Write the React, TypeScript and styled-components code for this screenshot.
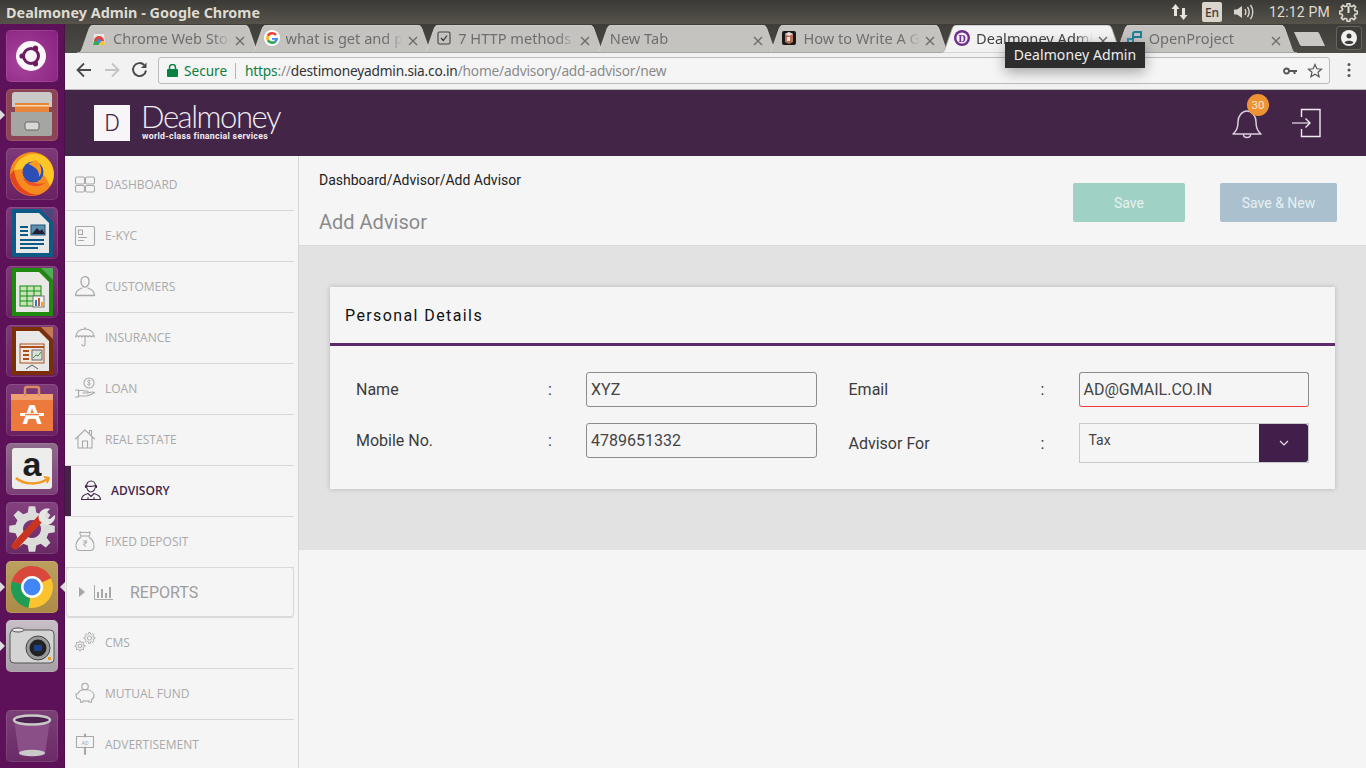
import React from "react";
import styled, { createGlobalStyle } from "styled-components";

const Global = createGlobalStyle`
  html, body { margin: 0; padding: 0; width: 1366px; height: 768px; overflow: hidden; background: #f5f5f5; }
  #root { width: 1366px; height: 768px; overflow: hidden; }
  * { box-sizing: border-box; }
`;

const uiFont = `"Noto Sans", "Open Sans", sans-serif`;
const roboto = `Roboto, "Liberation Sans", sans-serif`;
const plum = "#432548";

const Screen = styled.div`display: flex; flex-direction: column; width: 1366px; height: 768px; overflow: hidden; position: relative;`;
const TopBar = styled.header`
  height: 24px; flex: none; display: flex; align-items: center; padding: 0 8px 0 6px;
  background: linear-gradient(#3b3a36, #55534a);
  color: #dfdbd2;
`;
const WindowTitle = styled.div`flex: 1; white-space: nowrap; font: 700 14.4px ${uiFont};`;
const TrayIcon = styled.svg<{ $ml: number }>`display: block; margin-left: ${p => p.$ml}px; flex: none;`;
const LangBox = styled.div`
  width: 20px; height: 20px; margin-left: 14px; background: #d9d5cd; border-radius: 2px; color: #3c3b37;
  font: 500 12px ${uiFont}; display: flex; align-items: center; justify-content: center;
`;
const Clock = styled.div`margin-left: 14px; font: 400 14px ${roboto}; color: #dfdbd2; letter-spacing: .2px; white-space: nowrap;`;

const Desktop = styled.div`flex: 1; display: flex; min-height: 0;`;
const Launcher = styled.nav`
  width: 65px; flex: none; background: #5d1158; display: flex; flex-direction: column; align-items: center;
  padding-top: 6px; gap: 7px; border-right: 1px solid #4a0e48;
`;
const Tile = styled.div<{ $bg: string; $gap?: number }>`
  width: 52px; height: 52px; border-radius: 5px; flex: none; position: relative; background: ${p => p.$bg};
  margin-top: ${p => p.$gap || 0}px; box-shadow: inset 0 0 0 1px rgba(255,255,255,.1);
`;
const TileArt = styled.svg`display: block; width: 52px; height: 52px;`;
const PipLeft = styled.i`position: absolute; left: -6px; top: 21px; border: 5px solid transparent; border-left: 5px solid #ddd; border-right: 0;`;
const PipRight = styled.i`position: absolute; right: -7px; top: 21px; border: 5px solid transparent; border-right: 5px solid #ddd; border-left: 0;`;

const Browser = styled.div`flex: 1; min-width: 0; display: flex; flex-direction: column;`;
const TabStrip = styled.div`
  height: 29px; flex: none; display: flex; align-items: flex-end; padding-left: 12px; position: relative;
  background: linear-gradient(#3f3d39, #4d4b45);
`;
const Tab = styled.div<{ $active?: boolean }>`
  width: 184px; height: 28px; flex: none; margin-right: -11.4px; position: relative; z-index: ${p => p.$active ? 3 : 1};
  display: flex; align-items: center; padding: 0 0 2px 14px;
  color: ${p => p.$active ? "#444" : "#6e6e6e"}; font: 400 14.6px ${uiFont};
`;
const TabShape = styled.svg`position: absolute; left: 0; top: 0; width: 184px; height: 28px; z-index: -1;`;
const Favicon = styled.svg`width: 16px; height: 16px; flex: none; margin-right: 5px;`;
const TabLabel = styled.span<{ $noIcon?: boolean }>`
  width: 117px; margin-left: 1px; overflow: hidden; white-space: nowrap;
  -webkit-mask-image: linear-gradient(90deg, #000 85%, transparent);
  mask-image: linear-gradient(90deg, #000 85%, transparent);
`;
const TabClose = styled.span`position: absolute; left: 157px; top: 6px; width: 12px; height: 12px;`;
const NewTab = styled.svg`width: 34px; height: 16px; margin: 0 0 6px 9px; flex: none;`;
const ProfileBtn = styled.div`
  position: absolute; right: 4px; top: 2px; width: 26px; height: 24px; border-radius: 4px; background: #3d3b37;
  box-shadow: inset 0 0 0 1px #66645e; display: flex; align-items: center; justify-content: center;
`;

const Toolbar = styled.div`
  height: 37px; flex: none; display: flex; align-items: center; background: #f2f2f2; border-bottom: 1px solid #b9b9b9;
  padding: 0 0 2px 9px;
`;
const NavBtn = styled.svg`width: 20px; height: 20px; margin-right: 8px; flex: none; display: block;`;
const Omnibox = styled.div`
  margin-left: 0; width: 1172px; height: 27px; display: flex; align-items: center; background: #f5f5f5;
  border: 1px solid #bcbcbc; border-radius: 3px; padding: 0 6px 0 8px; font: 400 13.7px ${uiFont}; flex: none; margin-top: 1px;
`;
const LockIcon = styled.svg`flex: none;`;
const KeyIcon = styled.svg`flex: none; margin-right: 10px;`;
const StarIcon = styled.svg`flex: none;`;
const Secure = styled.span`color: #0b8043; margin-left: 6px; font-size: 13.6px;`;
const OmniSep = styled.span`width: 1px; height: 16px; background: #b5b5b5; margin: 0 9px 0 8px;`;
const Url = styled.div`flex: 1; white-space: nowrap; color: #8a8a8a; letter-spacing: -.19px;`;
const UrlGreen = styled.span`color: #0b8043;`;
const UrlHost = styled.span`color: #333;`;
const MenuDots = styled.svg`width: 4px; height: 16px; margin-left: 17px; flex: none;`;

const Tooltip = styled.div`
  position: absolute; left: 1005px; top: 42px; width: 140px; height: 26px; background: #2d2d2d; color: #eee;
  font: 400 14px ${uiFont}; display: flex; align-items: center; justify-content: center; z-index: 10; padding-bottom: 2px;
  box-shadow: 0 4px 14px rgba(0,0,0,.35); letter-spacing: .1px; white-space: nowrap;
`;

const Page = styled.div`flex: 1; min-height: 0; display: flex; flex-direction: column; background: #f5f5f5;`;
const AppHeader = styled.header`
  height: 66px; flex: none; background: ${plum}; display: flex; align-items: center; padding: 0 44px 0 29px;
`;
const LogoBox = styled.div`
  width: 36px; height: 36px; background: #f7f5f7; color: ${plum}; font: 300 24px ${roboto};
  display: flex; align-items: center; justify-content: center; flex: none;
`;
const Brand = styled.div`margin-left: 12px; padding-top: 11px; color: #f1ecf1; display: flex; flex-direction: column; flex: 1; align-self: flex-start;`;
const BrandName = styled.div`font: 300 31px/30px Lato, ${roboto}; letter-spacing: -1.45px; height: 30px; margin-left: -1px;`;
const BrandTag = styled.div`font: 700 8.8px/9px ${roboto}; letter-spacing: .28px; white-space: nowrap; margin-top: 1px;`;
const BellWrap = styled.div`position: relative; width: 30px; height: 30px; margin-top: 4px; flex: none;`;
const Badge = styled.span`
  position: absolute; left: 15px; top: -16px; width: 22px; height: 22px; border-radius: 50%; background: #ed9334; color: #f8e5cf;
  font: 400 11.5px ${roboto}; display: flex; align-items: center; justify-content: center;
`;
const HeadIcon = styled.svg`display: block; flex: none;`;
const LogoutIcon = styled(HeadIcon)`margin-left: 30px;`;

const Body = styled.div`flex: 1; min-height: 0; display: flex;`;
const Sidebar = styled.aside`
  width: 234px; flex: none; border-right: 1px solid #d5d5d5; padding: 4px 4px 0 0; overflow: hidden;
`;
const MenuRow = styled.div<{ $active?: boolean }>`
  height: 51px; display: flex; align-items: center; border-bottom: 1px solid #d7d7d7; padding: 0 0 2px ${p => p.$active ? 16 : 10}px;
  box-shadow: ${p => p.$active ? `inset 6px 0 0 ${plum}` : "none"};
  color: ${p => p.$active ? plum : "#a9a9a9"};
  font: ${p => p.$active ? 600 : 400} 12px "Open Sans", sans-serif;
`;
const MenuGlyph = styled.svg`width: 20px; height: 20px; margin-right: 10px; flex: none; display: block; overflow: visible;`;
const ReportsRow = styled.div`
  height: 50px; margin: -1px 0 1px 1px; display: flex; align-items: center; padding-left: 12px; color: #9d9d9d;
  border: 1px solid #d9d9d9; border-radius: 3px; box-shadow: 0 1px 1px rgba(0,0,0,.12); font: 400 16px ${roboto};
`;
const Caret = styled.i`border: 5px solid transparent; border-left: 6px solid #a8a8a8; border-right: 0; margin-right: 9px;`;
const ChartGlyph = styled.svg`width: 19px; height: 16px; margin-right: 17px; display: block;`;

const Main = styled.main`flex: 1; min-width: 0; display: flex; flex-direction: column;`;
const PageHead = styled.div`
  height: 90px; flex: none; border-bottom: 1px solid #d9d9d9; display: flex; padding: 0 29px 0 20px; justify-content: space-between;
`;
const Crumbs = styled.div`padding-top: 15px;`;
const Breadcrumb = styled.div`font: 400 14px/18px ${roboto}; color: #222;`;
const PageTitle = styled.h1`margin: 21px 0 0; font: 400 20px/24px ${roboto}; color: #8a8a8a;`;
const Actions = styled.div`display: flex; gap: 35px; padding-top: 27px;`;
const ActionBtn = styled.button<{ $bg: string; $w: number }>`
  width: ${p => p.$w}px; height: 39px; border: 0; border-radius: 2px; background: ${p => p.$bg}; color: #e6f1ef;
  font: 400 14px ${roboto}; padding: 0;
`;
const Band = styled.section`background: #e2e2e2; padding: 41px 31px 61px;`;
const Card = styled.div`background: #f5f5f5; box-shadow: 0 0 5px rgba(0,0,0,.2);`;
const CardHead = styled.h2`
  margin: 0; height: 59px; border-bottom: 3px solid #5f2a6c; padding: 0 15px; display: flex; align-items: center;
  font: 400 16px ${roboto}; letter-spacing: 1.4px; color: #111;
`;
const FormGrid = styled.div`display: grid; grid-template-columns: 1fr 1fr; column-gap: 32px; row-gap: 16px; padding: 26px;`;
const Field = styled.div<{ $center?: boolean }>`
  display: grid; grid-template-columns: 192px 38px 1fr; align-items: ${p => p.$center ? "center" : "start"};
  font: 400 16px/35px ${roboto}; color: #3c3c3c;
`;
const Colon = styled.span``;
const TextInput = styled.div<{ $error?: boolean }>`
  height: 35px; border: 1px solid #8c8c8c; border-radius: 3px; padding-left: 4px; line-height: 33px; color: #444;
  ${p => p.$error ? "border-bottom-color: #f03a3a;" : ""}
`;
const SelectBox = styled.div`
  height: 40px; border: 1px solid #c9c9c9; display: flex; justify-content: space-between; color: #444; font: 400 14px/32px ${roboto}; padding-left: 9px;
`;
const SelectBtn = styled.div`
  width: 49px; background: #401f4a; border-radius: 0 3px 3px 0; display: flex; align-items: center; justify-content: center;
`;

const gearPath = (cx: number, cy: number, ro: number, ri: number, teeth: number) => {
  const step = (Math.PI * 2) / teeth;
  let d = "";
  for (let i = 0; i < teeth; i++) {
    const a = i * step;
    const pts: [number, number][] = [
      [ri, a - step * 0.32], [ro, a - step * 0.18], [ro, a + step * 0.18], [ri, a + step * 0.32],
    ];
    pts.forEach(([r, t], j) => {
      d += `${i === 0 && j === 0 ? "M" : "L"}${(cx + r * Math.cos(t)).toFixed(2)} ${(cy + r * Math.sin(t)).toFixed(2)}`;
    });
  }
  return d + "Z";
};

const S = { fill: "none", stroke: "#a8a8a8", strokeWidth: 1.1, strokeLinecap: "round" as const, strokeLinejoin: "round" as const };
const A = { ...S, stroke: plum };

const glyphs: Record<string, React.ReactNode> = {
  dash: <g {...S}><rect x=".5" y="3" width="9" height="7" rx="1.5" /><rect x="10.5" y="3" width="9" height="7" rx="1.5" /><rect x=".5" y="11.500" width="9" height="6.5" rx="1.5" /><rect x="10.5" y="11.500" width="9" height="6.5" rx="1.5" /></g>,
  kyc: <g {...S}><rect x=".5" y="1.500" width="19" height="19" rx="1.5" /><rect x="3.5" y="5" width="4" height="4.5" /><path d="M3.5 12.500h8M3.5 15.500h5" /></g>,
  user: <g {...S} strokeWidth={1.3}><path d="M6 5.5c0-3 1.6-4.800 4-4.800s4 1.800 4 4.800-1.800 5.500-4 5.500-4-2.500-4-5.500z" /><path d="M.5 19.500c0-4 2.500-6 6.500-7.500M19.500 19.500c0-4-2.500-6-6.500-7.500M.5 19.500h19" /></g>,
  umbrella: <g {...S}><path d="M.5 10C1 5 5 2 10 2s9 3 9.500 8c-1-1.500-2.500-1.500-3.200 0-.8-1.500-2.500-1.500-3.200 0-.8-1.500-2.400-1.500-3.100 0-.7-1.500-2.300-1.500-3.100 0-.7-1.500-2.400-1.500-3.200 0C3 8.500 1.500 8.500.5 10z" /><path d="M10 2V.5M10 9v8.500c0 2-3 2-3 0" /></g>,
  loan: <g {...S}><circle cx="14" cy="5" r="5" /><path d="M14 2v6M12.500 6.500c1 1 3 .5 3-.8s-3-1-3-2.200 2-1.500 3-.8" strokeWidth=".8" /><path d="M.5 12h3v7h-3M3.500 13c2-1 4-1 6 0h3c1 0 1 2 0 2H8M3.500 18h7c3 0 6-1.500 9-3.500-1-1-3-.5-7 .5" /></g>,
  home: <g {...S}><path d="M.5 10 10 .8l9.500 9.200M3 8v11h14V8M7.500 19v-7h5v7M14.500 4V1.500h2v4.500" /></g>,
  advisor: <g {...A}><path d="M5.500 6c0-3 2-5 4.500-5s4.500 2 4.500 5-2 6-4.500 6-4.500-3-4.500-6zM5.500 5.500c2 1 6 1 9 0M4.500 7.500V5.500M15.500 7.500V5.500" /><path d="M.5 19.500c0-3.500 3-5 6.500-6l3 3 3-3c3.500 1 6.500 2.500 6.500 6zM7 19.500v-2M13 19.500v-2" /></g>,
  bag: <g {...S}><path d="M6 5C5 3.500 4.500 2 5 1c1.500 1 3 .3 5 .3s3.500.7 5-.3c.5 1-0 2.500-1 4M6 5h8M6 6C2 9 1 12 1 15c0 3 2 4.500 4 4.500h10c2 0 4-1.500 4-4.500 0-3-1-6-5-9" /><text x="10" y="16" fontFamily="Roboto" fontSize="9" textAnchor="middle" fill="#a8a8a8" stroke="none">₹</text></g>,
  gears: <g {...S} strokeWidth={.9}><path d={gearPath(5, 14, 5, 3.6, 8)} /><circle cx="5" cy="14" r="1.800" /><path d={gearPath(14.500, 6, 5.500, 4, 8)} /><circle cx="14.500" cy="6" r="2.100" /></g>,
  piggy: <g {...S}><circle cx="10" cy="3.500" r="3.200" /><path d="M1 11l2-.5C4 8 7 6.500 10 6.800c4-.3 8 1.500 9 5 .5 2.500-1 4-2.500 5v2.500h-2.500v-1.500c-2 .5-4 .5-6 0v1.500H5.500v-2.500C4 15.500 3 15 1.500 15z" /></g>,
  sign: <g {...S}><rect x="1.500" y="2.500" width="17" height="11" /><path d="M10 .5v2M10 13.500v6.500" strokeWidth="2.200" /><text x="10" y="10.500" fontFamily="Roboto" fontSize="5.500" textAnchor="middle" fill="#a8a8a8" stroke="none">AD</text></g>,
};

const rows: [string, string][] = [
  ["dash", "DASHBOARD"], ["kyc", "E-KYC"], ["user", "CUSTOMERS"], ["umbrella", "INSURANCE"],
  ["loan", "LOAN"], ["home", "REAL ESTATE"], ["advisor", "ADVISORY"], ["bag", "FIXED DEPOSIT"],
];
const rows2: [string, string][] = [["gears", "CMS"], ["piggy", "MUTUAL FUND"], ["sign", "ADVERTISEMENT"]];

const wedge = (a0: number, a1: number, c: string) => {
  const r = 21, x = 26, y = 26, t = Math.PI / 180;
  return <path d={`M${x} ${y}L${x + r * Math.cos(a0 * t)} ${y + r * Math.sin(a0 * t)}A${r} ${r} 0 0 1 ${x + r * Math.cos(a1 * t)} ${y + r * Math.sin(a1 * t)}Z`} fill={c} />;
};

const Doc = ({ c, children }: { c: string; children: React.ReactNode }) => (
  <TileArt viewBox="0 0 52 52">
    <path d="M6 2h29l12 13v35H6z" fill={c} />
    <path d="M10 6h23l10 10v30H10z" fill="#e8e8e6" />
    <path d="M37 2h10v11z" fill={c} opacity=".45" />
    {children}
  </TileArt>
);

const purpleTile = "linear-gradient(#7d3a78, #6a2163)";

const tabs = [
  { t: "Chrome Web Store", i: <g><path d="M3 4h10l1 11H2z" fill="#e8e8e8" /><path d="M3 11a5 5 0 0 1 10 0z" fill="#d9473a" /><path d="M3 11h5v4H2z" fill="#34a853" /><path d="M8 11h5l1 4H8z" fill="#fbc02d" /><circle cx="8" cy="11" r="2" fill="#4285f4" /><path d="M5 4V2h6v2" fill="none" stroke="#bbb" /></g> },
  { t: "what is get and post", i: <g><circle cx="8" cy="8" r="8" fill="#fff" /><path d="M13 4.300A6.200 6.200 0 0 0 2.800 5L5 6.800A3.500 3.500 0 0 1 11 5.800z" fill="#ea4335" /><path d="M2.800 5a6.200 6.200 0 0 0 0 6L5 9.300a3.500 3.500 0 0 1 0-2.500z" fill="#fbbc05" /><path d="M2.800 11a6.200 6.200 0 0 0 9.500 1.500L10 10.800A3.500 3.500 0 0 1 5 9.300z" fill="#34a853" /><path d="M14.100 8H8v1.800h3.500a3 3 0 0 1-1.500 1l2.300 1.700A6 6 0 0 0 14.100 8z" fill="#4285f4" /></g> },
  { t: "7 HTTP methods every", i: <g><rect x="2" y="2" width="12" height="12" rx="1.500" fill="none" stroke="#444" strokeWidth="1.100" /><path d="M5 8l2.300 2.500L11 5.500" fill="none" stroke="#333" strokeWidth="1.200" /></g> },
  { t: "New Tab" },
  { t: "How to Write A Good", i: <g><rect x="1" y="1" width="14" height="14" rx="2" fill="#1a1a1a" /><path d="M4 4l4-2 4 2v8l-4 2-4-2z" fill="#b9705a" /><path d="M4 4l4 2 4-2-4-2z" fill="#ddd" /><path d="M6 7h3v4H6z" fill="#e8e2da" /></g> },
  { t: "Dealmoney Admin", a: true, i: <g><circle cx="8" cy="8" r="8" fill="#6f2f8a" /><circle cx="8" cy="8" r="5.600" fill="#f4eff6" /><text x="8" y="11.500" textAnchor="middle" fontFamily="Liberation Serif" fontWeight="700" fontSize="10" fill="#6f2f8a">D</text></g> },
  { t: "OpenProject", i: <g fill="none" stroke="#2f8fb0" strokeWidth="2"><path d="M1 14V9h5v5z" /><path d="M6 9V4a2 2 0 0 1 2-2h6v5H6" stroke="#1f7e99" /></g> },
];

export default function App() {
  return (
    <Screen>
      <Global />
      <TopBar>
        <WindowTitle>Dealmoney Admin - Google Chrome</WindowTitle>
        <TrayIcon $ml={0} width="17" height="18" viewBox="0 0 17 18">
          <path d="M4.500 1 8.500 6H6v7H3V6H.5zM12.500 17l-4-5H11V5h3v7h2.500z" fill="#e8e4dc" />
        </TrayIcon>
        <LangBox>En</LangBox>
        <TrayIcon $ml={11} width="22" height="18" viewBox="0 0 22 18">
          <path d="M1 6.500h3L9 3v12l-5-3.500H1z" fill="#d8d4cc" />
          <path d="M12 6c1.200 2 1.200 4 0 6M14.500 4c2 3 2 7 0 10M17.500 2c3 4 3 10 0 14" fill="none" stroke="#d8d4cc" strokeWidth="1.400" />
        </TrayIcon>
        <Clock>12:12 PM</Clock>
        <TrayIcon $ml={9} width="19" height="19" viewBox="0 0 19 19">
          <path d={gearPath(9.500, 9.500, 9, 6.800, 8)} fill="none" stroke="#dfdbd2" strokeWidth="1.600" />
          <path d="M9.500 3v7" stroke="#dfdbd2" strokeWidth="2" />
        </TrayIcon>
      </TopBar>
      <Desktop>
        <Launcher>
          <Tile $bg="radial-gradient(circle at 35% 60%, #a7469b, #861e7e)">
            <TileArt viewBox="0 0 52 52">
              <circle cx="25" cy="26" r="15" fill="#fbf6fa" />
              <circle cx="25" cy="26" r="7.500" fill="none" stroke="#6d1b62" strokeWidth="3" />
              <circle cx="16" cy="26" r="2.600" fill="#6d1b62" />
              <circle cx="29.500" cy="18.200" r="2.600" fill="#6d1b62" />
              <circle cx="29.500" cy="33.800" r="2.600" fill="#6d1b62" />
            </TileArt>
          </Tile>
          <Tile $bg="#8e4457">
            <PipLeft />
            <TileArt viewBox="0 0 52 52">
              <path d="M6 6a3 3 0 0 1 3-3h34a3 3 0 0 1 3 3v12H6z" fill="#c9c9c7" />
              <rect x="9" y="14" width="34" height="10" fill="#e8873c" />
              <rect x="9" y="16" width="34" height="1.500" fill="#f6d9a8" />
              <path d="M5 23h41v22a2 2 0 0 1-2 2H7a2 2 0 0 1-2-2z" fill="#a5a5a2" />
              <rect x="19" y="33" width="14" height="8" rx="2" fill="#d8d8d6" stroke="#666" />
            </TileArt>
          </Tile>
          <Tile $bg={purpleTile}>
            <TileArt viewBox="0 0 52 52">
              <circle cx="26" cy="26" r="22" fill="#f58a1f" />
              <path d="M8 22C12 5 34 0 44 14c5 8 5 18 0 24-4-12-14-20-24-18-5 1-8 2-12 2z" fill="#ffc627" />
              <circle cx="27" cy="24" r="10.500" fill="#2b4fb5" />
              <path d="M17 30c3 8 14 11 22 5-9 2-17-1-22-5z" fill="#ef4f2a" />
              <path d="M22 16c6 2 12 6 11 13 5-6 1-14-3-17z" fill="#ff9a1f" />
              <path d="M4 27c2 14 14 23 28 20C20 46 10 38 8 22z" fill="#e5431e" />
            </TileArt>
          </Tile>
          <Tile $bg={purpleTile}>
            <Doc c="#0d5a86">
              <g fill="#0d5a86"><rect x="14" y="19" width="8" height="2" /><rect x="14" y="23" width="8" height="2" /><rect x="14" y="27" width="8" height="2" /><rect x="14" y="32" width="24" height="2" /><rect x="14" y="36" width="24" height="2" /><rect x="14" y="40" width="18" height="2" /></g>
              <rect x="25" y="18" width="14" height="10" fill="#5d8fb0" stroke="#24527a" />
              <path d="M26 27l5-6 3 3 2-2 3 5z" fill="#223" />
            </Doc>
          </Tile>
          <Tile $bg={purpleTile}>
            <Doc c="#1f8a10">
              <path d="M35 2h12v12z" fill="#4cb050" />
              <rect x="14" y="20" width="21" height="20" fill="#c8e6b5" stroke="#128a12" />
              <path d="M14 25h21M14 30h21M14 35h21M21 20v20M28 20v20" stroke="#128a12" />
              <rect x="27" y="30" width="11" height="11" fill="#f2f2f2" stroke="#777" />
              <rect x="29" y="34" width="2" height="6" fill="#2c7fc2" /><rect x="32" y="32" width="2" height="8" fill="#d4542c" /><rect x="35" y="36" width="2" height="4" fill="#f0a030" />
            </Doc>
          </Tile>
          <Tile $bg={purpleTile}>
            <Doc c="#7a2f08">
              <path d="M35 2h12v12z" fill="#c27b50" />
              <rect x="14" y="19" width="24" height="19" fill="#f3e8df" stroke="#a8501e" />
              <path d="M14 22h24" stroke="#a8501e" strokeWidth="2" />
              <rect x="17" y="25" width="6" height="2" fill="#a8501e" /><rect x="17" y="29" width="6" height="2" fill="#a8501e" /><rect x="17" y="33" width="6" height="2" fill="#a8501e" />
              <rect x="26" y="25" width="10" height="10" fill="#ddd" stroke="#666" />
              <path d="M27 33l3-3 2 1 3-4" stroke="#2f9a37" fill="none" />
              <path d="M20 44l6-4 6 4" stroke="#555" fill="none" />
            </Doc>
          </Tile>
          <Tile $bg={purpleTile}>
            <TileArt viewBox="0 0 52 52">
              <path d="M5 10h42v37H5z" fill="#ed7a3d" />
              <path d="M5 10h42v6H5z" fill="#f0a070" />
              <path d="M19 12V5a2 2 0 0 1 2-2h10a2 2 0 0 1 2 2v7" fill="none" stroke="#d98a66" strokeWidth="2.500" />
              <text x="26" y="40" fontFamily="Liberation Sans" fontWeight="700" fontSize="28" textAnchor="middle" fill="#fff">A</text>
              <rect x="14" y="29" width="24" height="3" rx="1" fill="#fff" />
              <rect x="19" y="29.800" width="14" height="1.500" fill="#ed7a3d" />
            </TileArt>
          </Tile>
          <Tile $bg="linear-gradient(#8f6b8c, #7b4077)">
            <TileArt viewBox="0 0 52 52">
              <rect x="6" y="5" width="40" height="41" rx="3" fill="#ededeb" />
              <text x="26" y="33" fontFamily="Liberation Sans" fontWeight="700" fontSize="34" textAnchor="middle" fill="#1d1d1d">a</text>
              <path d="M10 35c8 7 22 7 32 1" fill="none" stroke="#f29a1f" strokeWidth="2.500" />
              <path d="M38 34l5 1-2 5" fill="none" stroke="#f29a1f" strokeWidth="1.800" />
            </TileArt>
          </Tile>
          <Tile $bg="linear-gradient(#84417f, #6a2a66)">
            <TileArt viewBox="0 0 52 52">
              <path d={gearPath(26, 27, 23, 17, 8) + "M26 18a9 9 0 1 0 .01 0z"} fill="#dcdcda" fillRule="evenodd" />
              <path d="M9 44 35 16" stroke="#c8341f" strokeWidth="7" strokeLinecap="round" />
              <path d="M33 18c-2-7 4-13 11-11l-5 5 1 4 4 1 5-4c1 7-6 12-12 9z" fill="#e6e6e4" />
            </TileArt>
          </Tile>
          <Tile $bg="linear-gradient(#bda060, #ab8a45)">
            <PipLeft /><PipRight />
            <TileArt viewBox="0 0 52 52">
              {wedge(-165, -25, "#d9483b")}
              {wedge(-25, 100, "#fbc42e")}
              {wedge(100, 195, "#1f9d55")}
              <circle cx="26" cy="26" r="11" fill="#fff" />
              <circle cx="26" cy="26" r="8.500" fill="#4285f4" />
            </TileArt>
          </Tile>
          <Tile $bg="linear-gradient(#c8c0c6, #a89fa6)">
            <PipLeft />
            <TileArt viewBox="0 0 52 52">
              <rect x="4" y="10" width="44" height="33" rx="4" fill="#d4d4d4" stroke="#555" />
              <ellipse cx="12" cy="10" rx="6" ry="2" fill="#e8e8e8" stroke="#555" />
              <circle cx="32" cy="28" r="12" fill="#9a9a9a" stroke="#444" />
              <circle cx="32" cy="28" r="8.500" fill="#222" />
              <rect x="28" y="25" width="8" height="6" fill="#1b3f8a" />
              <rect x="42" y="37" width="3" height="3" fill="#e89a1f" />
            </TileArt>
          </Tile>
          <Tile $bg="linear-gradient(#7b4077, #6a2a66)" $gap={31}>
            <TileArt viewBox="0 0 52 52">
              <path d="M8 10 13 44c1 3 25 3 26 0l5-34z" fill="#8a4f87" />
              <ellipse cx="26" cy="10" rx="18" ry="4.500" fill="#4d2250" stroke="#c9c9c9" strokeWidth="2.500" />
              <ellipse cx="26" cy="43" rx="13" ry="3.200" fill="#c9c9c9" />
            </TileArt>
          </Tile>
        </Launcher>
        <Browser>
          <TabStrip>
            {tabs.map(tab => (
              <Tab key={tab.t} $active={tab.a}>
                <TabShape viewBox="0 0 184 28">
                  <path d="M0 28c3 0 4-1.500 5-4l7-20c1-2.500 2-4 5-4h150c3 0 4 1.500 5 4l7 20c1 2.500 2 4 5 4z" fill={tab.a ? "#f2f2f2" : "#c4c3c0"} stroke={tab.a ? "#a8a8a8" : "#d8d7d4"} strokeWidth=".8" />
                  {!tab.a && <path d="M0 27.500h184" stroke="#a6a6a6" />}
                </TabShape>
                {tab.i && <Favicon viewBox="0 0 16 16">{tab.i}</Favicon>}
                <TabLabel $noIcon={!tab.i}>{tab.t}</TabLabel>
                <TabClose>
                  <svg width="12" height="12" viewBox="0 0 12 12"><path d="M2 2l8 8M10 2l-8 8" stroke="#6a6a6a" strokeWidth="1.300" /></svg>
                </TabClose>
              </Tab>
            ))}
            <NewTab viewBox="0 0 34 16"><path d="M0 1h23c1 0 2 .5 2.500 2L31 15H8c-1 0-2-.5-2.500-2z" fill="#c9c8c5" /></NewTab>
            <ProfileBtn>
              <svg width="16" height="16" viewBox="0 0 16 16"><circle cx="8" cy="8" r="8" fill="#f0f0f0" /><circle cx="8" cy="6" r="2.500" fill="#3d3b37" /><path d="M3.500 12.500c1-2.500 8-2.500 9 0-2 2-7 2-9 0z" fill="#3d3b37" /></svg>
            </ProfileBtn>
          </TabStrip>
          <Toolbar>
            <NavBtn viewBox="0 0 20 20"><path d="M17 10H4M10 3.500 3.500 10l6.500 6.500" fill="none" stroke="#4a4a4a" strokeWidth="1.800" /></NavBtn>
            <NavBtn viewBox="0 0 20 20"><path d="M3 10h13M10 3.500l6.500 6.500-6.500 6.500" fill="none" stroke="#c4c4c4" strokeWidth="1.800" /></NavBtn>
            <NavBtn viewBox="0 0 20 20"><path d="M16 10.500A6.500 6.500 0 1 1 14.200 5" fill="none" stroke="#4a4a4a" strokeWidth="1.900" /><path d="M16.500 2.500v5.500H11z" fill="#4a4a4a" /></NavBtn>
            <Omnibox>
              <LockIcon width="11" height="13" viewBox="0 0 11 13"><rect y="5" width="11" height="8" rx="1" fill="#0b8043" /><path d="M2.500 5.500V3.500a3 3 0 0 1 6 0v2" fill="none" stroke="#0b8043" strokeWidth="1.500" /></LockIcon>
              <Secure>Secure</Secure>
              <OmniSep />
              <Url><UrlGreen>https</UrlGreen>://<UrlHost>destimoneyadmin.sia.co.in</UrlHost>/home/advisory/add-advisor/new</Url>
              <KeyIcon width="14" height="8" viewBox="0 0 14 8"><circle cx="3.500" cy="4" r="2.500" fill="none" stroke="#555" strokeWidth="1.800" /><path d="M6 3h8v2h-1.500v2h-2V5H6z" fill="#555" /></KeyIcon>
              <StarIcon width="16" height="16" viewBox="0 0 16 16"><path d="M8 1.500l1.900 4.300 4.600.4-3.500 3 1.100 4.500L8 11.300l-4.100 2.400L5 9.200l-3.500-3 4.600-.4z" fill="none" stroke="#555" strokeWidth="1.200" /></StarIcon>
            </Omnibox>
            <MenuDots viewBox="0 0 4 16"><circle cx="2" cy="2.500" r="1.500" fill="#555" /><circle cx="2" cy="8" r="1.500" fill="#555" /><circle cx="2" cy="13.500" r="1.500" fill="#555" /></MenuDots>
          </Toolbar>
          <Page>
            <AppHeader>
              <LogoBox>D</LogoBox>
              <Brand>
                <BrandName>Dealmoney</BrandName>
                <BrandTag>world-class financial services</BrandTag>
              </Brand>
              <BellWrap>
                <HeadIcon width="30" height="30" viewBox="0 0 30 30">
                  <path d="M1 24c4-3 5-7 5-12 0-6 4-11 9-11s9 5 9 11c0 5 1 9 5 12z" fill="none" stroke="#d8d0da" strokeWidth="1.500" strokeLinejoin="round" />
                  <path d="M11.500 24.500c0 4 7 4 7 0" fill="none" stroke="#d8d0da" strokeWidth="1.500" />
                </HeadIcon>
                <Badge>30</Badge>
              </BellWrap>
              <LogoutIcon width="30" height="30" viewBox="0 0 30 30">
                <path d="M9.500 9V1.500h18.500v27H9.500V21" fill="none" stroke="#f0ecf0" strokeWidth="1.400" />
                <path d="M0 15h18" stroke="#cfc6d2" strokeWidth="1.400" />
                <path d="M13.500 10.500 18 15l-4.500 4.500" fill="none" stroke="#f0ecf0" strokeWidth="1.400" />
              </LogoutIcon>
            </AppHeader>
            <Body>
              <Sidebar>
                {rows.map(([k, label]) => (
                  <MenuRow key={k} $active={k === "advisor"}>
                    <MenuGlyph viewBox="0 0 20 20">{glyphs[k]}</MenuGlyph>
                    {label}
                  </MenuRow>
                ))}
                <ReportsRow>
                  <Caret />
                  <ChartGlyph viewBox="0 0 19 16">
                    <path d="M.5 1v14.500H19" fill="none" stroke="#a8a8a8" />
                    <path d="M4 8v6M8 5v9M12 9v5M16 3v11" stroke="#a8a8a8" strokeWidth="2" />
                  </ChartGlyph>
                  REPORTS
                </ReportsRow>
                {rows2.map(([k, label]) => (
                  <MenuRow key={k}>
                    <MenuGlyph viewBox="0 0 20 20">{glyphs[k]}</MenuGlyph>
                    {label}
                  </MenuRow>
                ))}
              </Sidebar>
              <Main>
                <PageHead>
                  <Crumbs>
                    <Breadcrumb>Dashboard/Advisor/Add Advisor</Breadcrumb>
                    <PageTitle>Add Advisor</PageTitle>
                  </Crumbs>
                  <Actions>
                    <ActionBtn $bg="#a0d1c5" $w={112}>Save</ActionBtn>
                    <ActionBtn $bg="#abc0cf" $w={117}>Save &amp; New</ActionBtn>
                  </Actions>
                </PageHead>
                <Band>
                  <Card>
                    <CardHead>Personal Details</CardHead>
                    <FormGrid>
                      <Field><span>Name</span><Colon>:</Colon><TextInput>XYZ</TextInput></Field>
                      <Field><span>Email</span><Colon>:</Colon><TextInput $error>AD@GMAIL.CO.IN</TextInput></Field>
                      <Field><span>Mobile No.</span><Colon>:</Colon><TextInput>4789651332</TextInput></Field>
                      <Field $center><span>Advisor For</span><Colon>:</Colon>
                        <SelectBox>Tax
                          <SelectBtn>
                            <svg width="10" height="6" viewBox="0 0 10 6"><path d="M1 1l4 4 4-4" fill="none" stroke="#e8e0ea" strokeWidth="1.200" /></svg>
                          </SelectBtn>
                        </SelectBox>
                      </Field>
                    </FormGrid>
                  </Card>
                </Band>
              </Main>
            </Body>
          </Page>
        </Browser>
      </Desktop>
      <Tooltip>Dealmoney Admin</Tooltip>
    </Screen>
  );
}
